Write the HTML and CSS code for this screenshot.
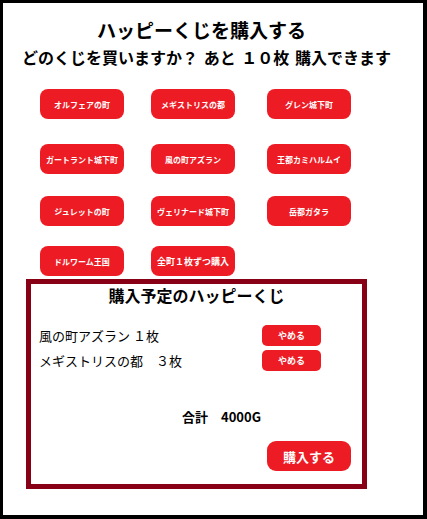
FILE: index.html
```html
<!DOCTYPE html>
<html lang="ja">
<head>
<meta charset="utf-8">
<title>ハッピーくじを購入する</title>
<link rel="stylesheet" href="styles.css">
</head>
<body>
<div class="frame">
  <h1 class="title">ハッピーくじを購入する</h1>
  <p class="subtitle">どのくじを買いますか？ あと １０枚 購入できます</p>
  <div class="lots">
    <button class="lot">オルフェアの町</button>
    <button class="lot">メギストリスの都</button>
    <button class="lot">グレン城下町</button>
    <button class="lot">ガートラント城下町</button>
    <button class="lot">風の町アズラン</button>
    <button class="lot">王都カミハルムイ</button>
    <button class="lot">ジュレットの町</button>
    <button class="lot">ヴェリナード城下町</button>
    <button class="lot">岳都ガタラ</button>
    <button class="lot">ドルワーム王国</button>
    <button class="lot lot-all">全町１枚ずつ購入</button>
  </div>
  <section class="cart">
    <h2 class="cart-title">購入予定のハッピーくじ</h2>
    <div class="cart-items">
      <div class="cart-item">
        <span class="item-name">風の町アズラン １枚</span>
        <button class="cancel">やめる</button>
      </div>
      <div class="cart-item">
        <span class="item-name">メギストリスの都　３枚</span>
        <button class="cancel">やめる</button>
      </div>
    </div>
    <p class="total">合計　4000G</p>
    <div class="buy-row">
      <button class="buy">購入する</button>
    </div>
  </section>
</div>
</body>
</html>
```

FILE: styles.css
```css
html, body {
  margin: 0;
  padding: 0;
  background: #000;
}
body {
  width: 427px;
  height: 519px;
  padding: 3px 4px 4px 3px;
  box-sizing: border-box;
  font-family: "Noto Sans CJK JP", "Noto Sans", sans-serif;
  color: #000;
}
.frame {
  background: #fff;
  width: 420px;
  height: 512px;
  padding-top: 14px;
  box-sizing: border-box;
}
.title {
  margin: 0;
  padding-left: 94px;
  font-size: 19px;
  line-height: 25px;
  font-weight: bold;
}
.subtitle {
  margin: 3px 0 0;
  padding-left: 19px;
  font-size: 16px;
  line-height: 25px;
  font-weight: bold;
  word-spacing: 2px;
}
.lots {
  margin-top: 19px;
  padding-left: 37px;
  display: grid;
  grid-template-columns: 111px 116px 84px;
  grid-template-rows: 55px 52px 50px 30px;
  align-items: start;
}
.lot {
  width: 84px;
  height: 30px;
  border: 0;
  padding: 0;
  border-radius: 8px;
  background: #ed1c24;
  color: #fff;
  font-family: inherit;
  font-size: 8px;
  font-weight: bold;
  white-space: nowrap;
}
.lot-all {
  font-size: 9px;
}
.cart {
  margin: 3px 0 0 23px;
  width: 341px;
  height: 210px;
  border: 5px solid #880015;
  box-sizing: border-box;
}
.cart-title {
  margin: 1px 0 0;
  text-align: center;
  font-size: 16px;
  line-height: 20px;
  font-weight: bold;
}
.cart-items {
  margin-top: 20px;
  padding-left: 8px;
  display: flex;
  flex-direction: column;
  gap: 4px;
}
.cart-item {
  display: grid;
  grid-template-columns: 223px 59px;
  align-items: center;
  height: 21px;
}
.item-name {
  font-size: 13px;
  line-height: 21px;
  white-space: nowrap;
}
.cancel {
  width: 59px;
  height: 21px;
  border: 0;
  padding: 0;
  border-radius: 5px;
  background: #ed1c24;
  color: #fff;
  font-family: inherit;
  font-size: 9px;
  font-weight: bold;
}
.total {
  margin: 36px 0 0;
  padding-left: 151px;
  font-size: 13px;
  line-height: 20px;
  font-weight: bold;
}
.buy-row {
  margin-top: 14px;
  display: flex;
  justify-content: flex-end;
  padding-right: 11px;
}
.buy {
  width: 84px;
  height: 30px;
  border: 0;
  padding: 0;
  border-radius: 9px;
  background: #ed1c24;
  color: #fff;
  font-family: inherit;
  font-size: 13px;
  font-weight: bold;
}
```
